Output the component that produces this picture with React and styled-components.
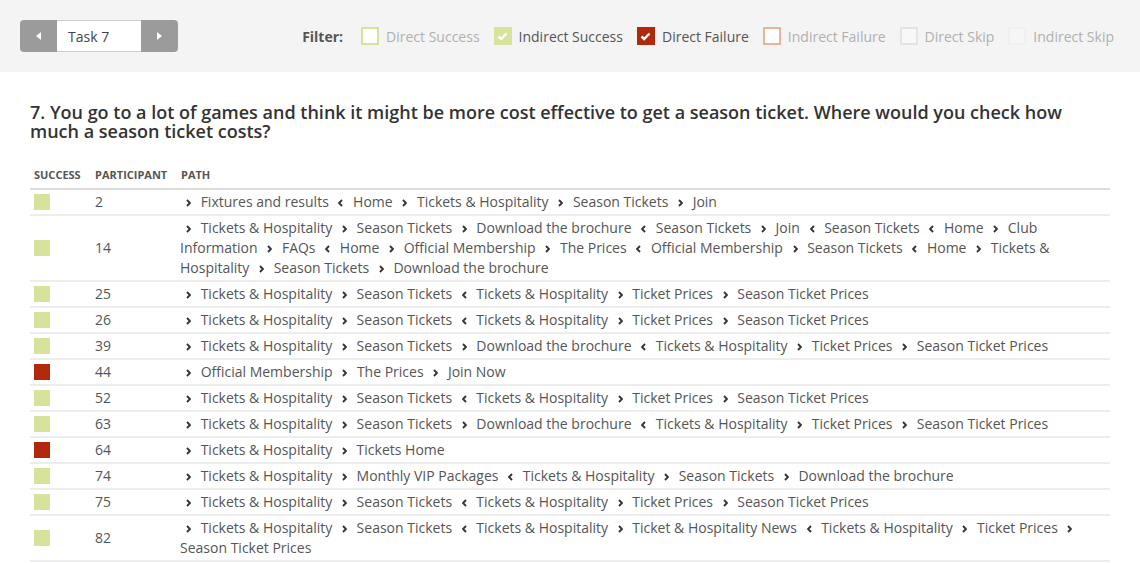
import React from "react";
import styled, { createGlobalStyle } from "styled-components";

const Global = createGlobalStyle`
  html, body { margin: 0; padding: 0; background: #fff; }
  body { font-family: "Open Sans", "Liberation Sans", sans-serif; color: #555; }
  * { box-sizing: border-box; }
`;

const TopBar = styled.div`
  background: #f4f4f4;
  height: 72px;
  display: flex;
  align-items: center;
  justify-content: space-between;
  padding: 0 26px 0 20px;
`;

const Nav = styled.div`
  display: flex;
  height: 32px;
`;

const NavButton = styled.div`
  width: 37px;
  background: #9b9b9b;
  display: flex;
  align-items: center;
  justify-content: center;
  border-radius: ${(p) => (p.$side === "left" ? "4px 0 0 4px" : "0 4px 4px 0")};
`;

const NavLabel = styled.div`
  width: 84px;
  background: #fff;
  border-top: 1px solid #ccc;
  border-bottom: 1px solid #ccc;
  display: flex;
  align-items: center;
  padding-left: 11px;
  font-size: 14px;
  color: #444;
`;

const Filters = styled.div`
  display: flex;
  align-items: center;
  font-size: 14px;
`;

const FilterTitle = styled.span`
  font-weight: 700;
  color: #555;
  margin-right: 18px;
`;

const FilterItem = styled.label`
  display: flex;
  align-items: center;
  margin-left: ${(p) => (p.$first ? "0" : "14px")};
  color: ${(p) => (p.$on ? "#555" : "#b0b0b0")};
`;

const Box = styled.span`
  width: 18px;
  height: 18px;
  border: 2px solid ${(p) => p.$border};
  background: ${(p) => p.$fill};
  margin-right: 7px;
  display: inline-flex;
  align-items: center;
  justify-content: center;
`;

const Content = styled.div`
  padding: 0 30px;
`;

const Question = styled.h1`
  font-size: 18px;
  font-weight: 600;
  line-height: 19px;
  color: #333;
  margin: 31px 0 24px;
`;

const Table = styled.table`
  width: 100%;
  border-collapse: collapse;
  font-size: 14px;
  color: #555;
`;

const Th = styled.th`
  text-align: left;
  font-size: 11px;
  font-weight: 700;
  text-transform: uppercase;
  color: #555;
  padding: 2px 4px 6px;
  border-bottom: 2px solid #ddd;
  white-space: nowrap;
  width: ${(p) => p.$w || "auto"};
`;

const Td = styled.td`
  padding: 2px 4px 2px;
  padding-left: ${(p) => p.$pl || "4px"};
  line-height: 20px;
  border-bottom: 2px solid #ededed;
  vertical-align: middle;
`;

const Swatch = styled.span`
  display: block;
  width: 16px;
  height: 16px;
  background: ${(p) => (p.$fail ? "#b0290b" : "#d7e29b")};
`;

const Step = styled.span``;

const ChevWrap = styled.svg`
  display: inline-block;
  width: 5px;
  height: 8px;
  margin: 0 6px 0 6px;
  vertical-align: 0px;
`;

const Chev = ({ dir }) => (
  <ChevWrap viewBox="0 0 5 8">
    {dir === ">" ? (
      <polyline points="1,1 4,4 1,7" fill="none" stroke="#333" strokeWidth="1.9" />
    ) : (
      <polyline points="4,1 1,4 4,7" fill="none" stroke="#333" strokeWidth="1.9" />
    )}
  </ChevWrap>
);

const Tri = ({ dir }) => (
  <svg width="5" height="8" viewBox="0 0 5 8">
    {dir === "l" ? <polygon points="5,0 0,4 5,8" fill="#fff" /> : <polygon points="0,0 5,4 0,8" fill="#fff" />}
  </svg>
);

const Check = () => (
  <svg width="11" height="9" viewBox="0 0 11 9">
    <polyline points="1.5,4.5 4.2,7 9.5,1.5" fill="none" stroke="#fff" strokeWidth="2.4" />
  </svg>
);

const filters = [
  { label: "Direct Success", border: "#d7e29b", fill: "#fff", on: false },
  { label: "Indirect Success", border: "#d7e29b", fill: "#d7e29b", on: true },
  { label: "Direct Failure", border: "#b0290b", fill: "#b0290b", on: true },
  { label: "Indirect Failure", border: "#e9b497", fill: "#fff", on: false },
  { label: "Direct Skip", border: "#e4e4e4", fill: "#f8f8f8", on: false },
  { label: "Indirect Skip", border: "#f0f0f0", fill: "#f6f6f6", on: false },
];

const P = (s) =>
  s.split(/ (?=[<>] )/).map((part) => ({ d: part[0], name: part.slice(2) }));

const rows = [
  { f: false, n: 2, p: "> Fixtures and results < Home > Tickets & Hospitality > Season Tickets > Join" },
  {
    f: false,
    n: 14,
    p: "> Tickets & Hospitality > Season Tickets > Download the brochure < Season Tickets > Join < Season Tickets < Home > Club Information > FAQs < Home > Official Membership > The Prices < Official Membership > Season Tickets < Home > Tickets & Hospitality > Season Tickets > Download the brochure",
  },
  { f: false, n: 25, p: "> Tickets & Hospitality > Season Tickets < Tickets & Hospitality > Ticket Prices > Season Ticket Prices" },
  { f: false, n: 26, p: "> Tickets & Hospitality > Season Tickets < Tickets & Hospitality > Ticket Prices > Season Ticket Prices" },
  { f: false, n: 39, p: "> Tickets & Hospitality > Season Tickets > Download the brochure < Tickets & Hospitality > Ticket Prices > Season Ticket Prices" },
  { f: true, n: 44, p: "> Official Membership > The Prices > Join Now" },
  { f: false, n: 52, p: "> Tickets & Hospitality > Season Tickets < Tickets & Hospitality > Ticket Prices > Season Ticket Prices" },
  { f: false, n: 63, p: "> Tickets & Hospitality > Season Tickets > Download the brochure < Tickets & Hospitality > Ticket Prices > Season Ticket Prices" },
  { f: true, n: 64, p: "> Tickets & Hospitality > Tickets Home" },
  { f: false, n: 74, p: "> Tickets & Hospitality > Monthly VIP Packages < Tickets & Hospitality > Season Tickets > Download the brochure" },
  { f: false, n: 75, p: "> Tickets & Hospitality > Season Tickets < Tickets & Hospitality > Ticket Prices > Season Ticket Prices" },
  { f: false, n: 82, p: "> Tickets & Hospitality > Season Tickets < Tickets & Hospitality > Ticket & Hospitality News < Tickets & Hospitality > Ticket Prices > Season Ticket Prices" },
];

export default function App() {
  return (
    <>
      <Global />
      <TopBar>
        <Nav>
          <NavButton $side="left">
            <Tri dir="l" />
          </NavButton>
          <NavLabel>Task 7</NavLabel>
          <NavButton $side="right">
            <Tri dir="r" />
          </NavButton>
        </Nav>
        <Filters>
          <FilterTitle>Filter:</FilterTitle>
          {filters.map((f, i) => (
            <FilterItem key={f.label} $first={i === 0} $on={f.on}>
              <Box $border={f.border} $fill={f.fill}>{f.on && <Check />}</Box>
              {f.label}
            </FilterItem>
          ))}
        </Filters>
      </TopBar>
      <Content>
        <Question>
          7. You go to a lot of games and think it might be more cost effective to get a season ticket. Where would you check how much a season ticket costs?
        </Question>
        <Table>
          <thead>
            <tr>
              <Th $w="61px">Success</Th>
              <Th $w="86px">Participant</Th>
              <Th>Path</Th>
            </tr>
          </thead>
          <tbody>
            {rows.map((r) => (
              <tr key={r.n}>
                <Td>
                  <Swatch $fail={r.f} />
                </Td>
                <Td>{r.n}</Td>
                <Td $pl="3px">
                  {P(r.p).map((s, i) => (
                    <Step key={i}>
                      <Chev dir={s.d} /> {s.name}{" "}
                    </Step>
                  ))}
                </Td>
              </tr>
            ))}
          </tbody>
        </Table>
      </Content>
    </>
  );
}
